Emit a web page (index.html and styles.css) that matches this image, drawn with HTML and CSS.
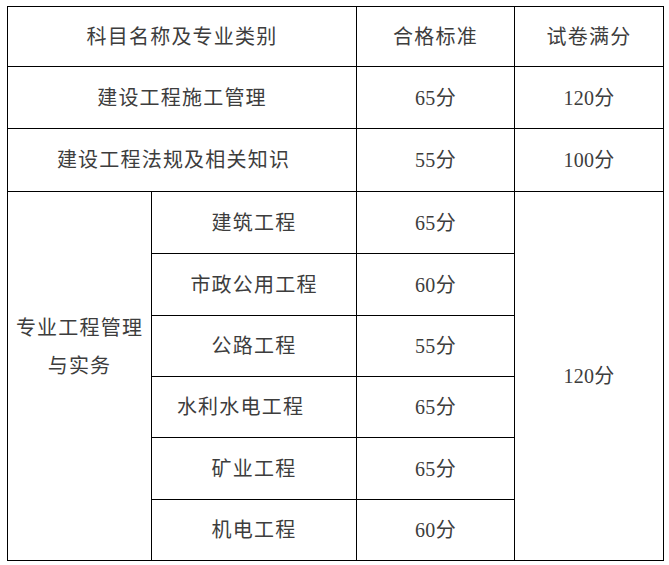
FILE: index.html
```html
<!DOCTYPE html>
<html lang="zh-CN">
<head>
<meta charset="utf-8">
<title>考试科目合格标准</title>
<link rel="stylesheet" href="styles.css">
</head>
<body>
<div class="score-table">
  <div class="cell head span2">科目名称及专业类别</div>
  <div class="cell head">合格标准</div>
  <div class="cell head">试卷满分</div>

  <div class="cell span2">建设工程施工管理</div>
  <div class="cell num">65分</div>
  <div class="cell num">120分</div>

  <div class="cell span2 shift-s">建设工程法规及相关知识</div>
  <div class="cell num">55分</div>
  <div class="cell num">100分</div>

  <div class="cell group"><span class="group-text">专业工程管理与实务</span></div>
  <div class="cell">建筑工程</div>
  <div class="cell num">65分</div>
  <div class="cell num full">120分</div>

  <div class="cell">市政公用工程</div>
  <div class="cell num">60分</div>

  <div class="cell">公路工程</div>
  <div class="cell num">55分</div>

  <div class="cell shift-l">水利水电工程</div>
  <div class="cell num">65分</div>

  <div class="cell">矿业工程</div>
  <div class="cell num">65分</div>

  <div class="cell">机电工程</div>
  <div class="cell num">60分</div>
</div>
</body>
</html>
```
FILE: styles.css
```css
html, body {
  margin: 0;
  padding: 0;
  background: #ffffff;
}

body {
  padding: 6px 0 0 7px;
  font-family: "Liberation Serif", "Noto Sans CJK SC", sans-serif;
  font-size: 20px;
  color: #3d3d3d;
}

.score-table {
  display: grid;
  width: 657px;
  box-sizing: border-box;
  grid-template-columns: 143px 204px 157px 148px;
  grid-template-rows: 59px 61px 62px 61px 61px 60px 60px 61px 60px;
  gap: 1px;
  padding: 1px;
  background: #000000;
}

.cell {
  background: #ffffff;
  display: flex;
  align-items: center;
  justify-content: center;
  text-align: center;
  letter-spacing: 1.2px;
  padding-bottom: 3px;
}

.num {
  letter-spacing: 0.3px;
}

.span2 {
  grid-column: span 2;
}

.shift-s {
  padding-right: 17px;
}

.shift-l {
  padding-right: 27px;
}

.group {
  grid-column: 1;
  grid-row: 4 / span 6;
  padding: 0 6px 59px;
  line-height: 38px;
}

.full {
  grid-column: 4;
  grid-row: 4 / span 6;
}
```
